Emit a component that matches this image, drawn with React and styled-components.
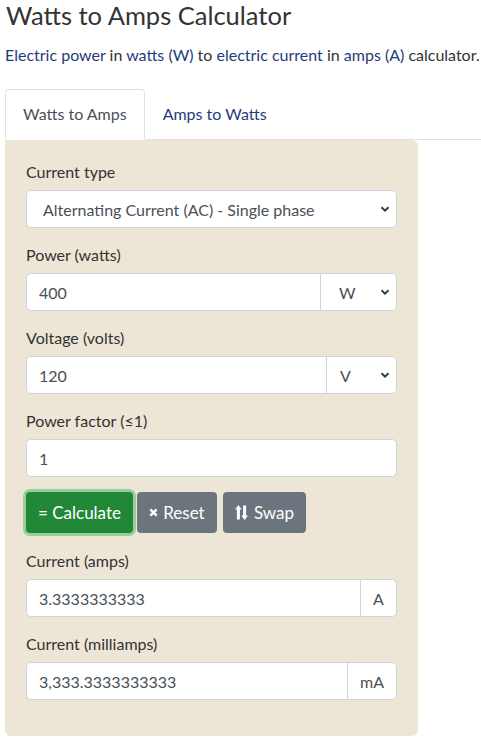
import React from "react";
import styled, { createGlobalStyle } from "styled-components";

const Global = createGlobalStyle`
  html, body { margin: 0; padding: 0; background: #fff; }
  body {
    font-family: "Segoe UI", Lato, "Open Sans", sans-serif;
    font-size: 16px;
    color: #333;
  }
  * { box-sizing: border-box; }
`;

const Page = styled.div`
  padding: 0 0 0 5px;
`;

const Title = styled.h1`
  margin: 0;
  font-size: 25.5px;
  font-weight: 400;
  line-height: 30px;
  color: #333;
  padding-left: 1px;
`;

const Lead = styled.p`
  margin: 13px 0 0;
  line-height: 24px;
  color: #333;
  white-space: nowrap;
`;

const A = styled.a`
  color: #1f3c7a;
  text-decoration: none;
`;

const Tabs = styled.nav`
  display: flex;
  margin-top: 22px;
  border-bottom: 1px solid #dee2e6;
`;

const Tab = styled.div`
  padding: 12px 17px 13px;
  line-height: 24px;
  border: 1px solid ${(p) => (p.$active ? "#dee2e6" : "transparent")};
  border-bottom-color: ${(p) => (p.$active ? "#fff" : "transparent")};
  border-radius: 4px 4px 0 0;
  margin-bottom: -1px;
  background: ${(p) => (p.$active ? "#fff" : "transparent")};
  color: ${(p) => (p.$active ? "#495057" : "#1f3c7a")};
`;

const Card = styled.div`
  width: 413px;
  background: #ede6d6;
  border-radius: 0 6px 6px 6px;
  padding: 20px 21px 21px 21px;
`;

const Group = styled.div`
  margin-bottom: 15px;
`;

const Label = styled.label`
  display: block;
  line-height: 24px;
  margin-bottom: 6px;
  color: #333;
`;

const fieldBase = `
  height: 38px;
  font-family: inherit;
  font-size: 16px;
  color: #495057;
  background-color: #fff;
  border: 1px solid #ced4da;
  outline: none;
`;

const InputGroup = styled.div`
  display: flex;
`;

const Input = styled.input`
  ${fieldBase}
  flex: 1;
  min-width: 0;
  width: 100%;
  padding: 0 12px;
  border-radius: ${(p) => (p.$joined ? "5px 0 0 5px" : "5px")};
`;

const chevron =
  "url(\"data:image/svg+xml,%3Csvg xmlns='http://www.w3.org/2000/svg' width='10' height='8' viewBox='0 0 10 8'%3E%3Cpath d='M1.5 2.2 L5 5.6 L8.5 2.2' fill='none' stroke='%23343a40' stroke-width='2'/%3E%3C/svg%3E\")";

const Select = styled.select`
  ${fieldBase}
  appearance: none;
  -webkit-appearance: none;
  width: ${(p) => p.$width || "100%"};
  flex: ${(p) => (p.$width ? "none" : "1")};
  padding: 0 24px 0 ${(p) => p.$pl || 16}px;
  background-image: ${chevron};
  background-repeat: no-repeat;
  background-position: right 6px center;
  border-radius: ${(p) => (p.$joined ? "0 5px 5px 0" : "5px")};
  margin-left: ${(p) => (p.$joined ? "-1px" : "0")};
`;

const Addon = styled.span`
  ${fieldBase}
  display: flex;
  align-items: center;
  justify-content: center;
  width: ${(p) => p.$width};
  flex: none;
  margin-left: -1px;
  border-radius: 0 5px 5px 0;
  color: #495057;
`;

const Buttons = styled.div`
  display: flex;
  margin-bottom: 16px;
`;

const Btn = styled.button`
  height: 41px;
  width: ${(p) => p.$w}px;
  padding: 0;
  margin-right: ${(p) => p.$mr || 0}px;
  border: none;
  border-radius: 4px;
  font-family: inherit;
  font-size: 17px;
  color: #fff;
  display: inline-flex;
  align-items: center;
  justify-content: center;
  gap: ${(p) => p.$gap || 6}px;
  background: ${(p) => (p.$variant === "success" ? "#218838" : "#6c757d")};
  box-shadow: ${(p) =>
    p.$focus ? "0 0 0 3px rgba(96, 190, 116, 0.6)" : "none"};
`;

const SwapIcon = () => (
  <svg width="13" height="15" viewBox="0 0 13 15" aria-hidden="true">
    <path d="M3.4 0 L6.8 4.6 L4.9 4.6 L4.9 14.5 L1.9 14.5 L1.9 4.6 L0 4.6 Z" fill="#fff" />
    <path d="M9.6 15 L13 10.4 L11.1 10.4 L11.1 0.5 L8.1 0.5 L8.1 10.4 L6.2 10.4 Z" fill="#fff" />
  </svg>
);

const XIcon = () => (
  <svg width="9" height="9" viewBox="0 0 10 10" aria-hidden="true">
    <path d="M1.5 1.5 L8.5 8.5 M8.5 1.5 L1.5 8.5" stroke="#fff" strokeWidth="2.6" />
  </svg>
);

export default function App() {
  return (
    <>
      <Global />
      <Page>
        <Title>Watts to Amps Calculator</Title>
        <Lead>
          <A>Electric power</A> in <A>watts (W)</A> to <A>electric current</A> in{" "}
          <A>amps (A)</A> calculator.
        </Lead>
        <Tabs>
          <Tab $active>Watts to Amps</Tab>
          <Tab>Amps to Watts</Tab>
        </Tabs>
        <Card>
          <Group>
            <Label>Current type</Label>
            <Select defaultValue="ac1">
              <option value="ac1">Alternating Current (AC) - Single phase</option>
            </Select>
          </Group>
          <Group>
            <Label>Power (watts)</Label>
            <InputGroup>
              <Input $joined defaultValue="400" />
              <Select $joined $width="77px" $pl={18}>
                <option>W</option>
              </Select>
            </InputGroup>
          </Group>
          <Group>
            <Label>Voltage (volts)</Label>
            <InputGroup>
              <Input $joined defaultValue="120" />
              <Select $joined $width="71px" $pl={13}>
                <option>V</option>
              </Select>
            </InputGroup>
          </Group>
          <Group>
            <Label>Power factor (≤1)</Label>
            <Input defaultValue="1" />
          </Group>
          <Buttons>
            <Btn $variant="success" $focus $mr={4} $w={107}>
              = Calculate
            </Btn>
            <Btn $mr={6} $w={80} $gap={5}>
              <XIcon /> Reset
            </Btn>
            <Btn $w={83} $gap={6}>
              <SwapIcon /> Swap
            </Btn>
          </Buttons>
          <Group>
            <Label>Current (amps)</Label>
            <InputGroup>
              <Input $joined readOnly value="3.3333333333" />
              <Addon $width="37px">A</Addon>
            </InputGroup>
          </Group>
          <Group>
            <Label>Current (milliamps)</Label>
            <InputGroup>
              <Input $joined readOnly value="3,333.3333333333" />
              <Addon $width="50px">mA</Addon>
            </InputGroup>
          </Group>
        </Card>
      </Page>
    </>
  );
}
